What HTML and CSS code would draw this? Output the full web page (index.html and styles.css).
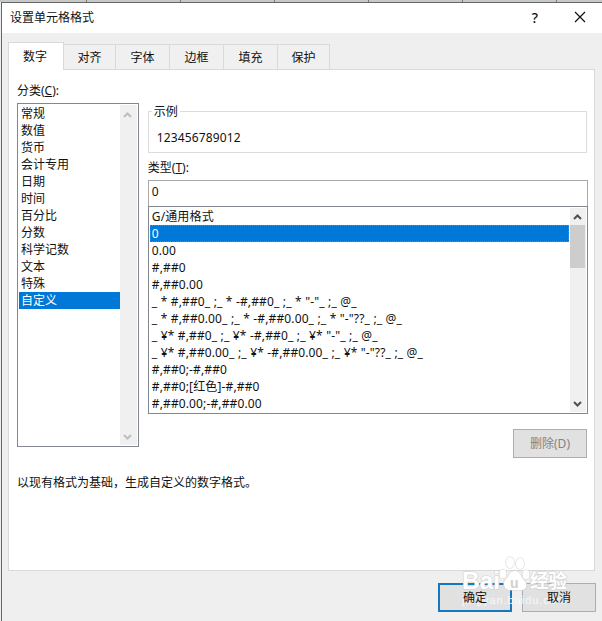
FILE: index.html
```html
<!DOCTYPE html>
<html lang="zh-CN">
<head>
<meta charset="utf-8">
<title>设置单元格格式</title>
<link rel="stylesheet" href="styles.css">
</head>
<body>
<div class="sheet-edge"></div>
<main class="dialog">
  <header class="titlebar">
    <h1>设置单元格格式</h1>
    <span class="help">?</span>
    <svg class="close" width="12" height="12" viewBox="0 0 12 12"><path d="M1 1l10 10M11 1L1 11"/></svg>
  </header>
  <nav class="tabs">
    <span class="tab active">数字</span><span class="tab first">对齐</span><span class="tab">字体</span><span class="tab">边框</span><span class="tab">填充</span><span class="tab last">保护</span>
  </nav>
  <section class="panel">
    <div class="columns">
      <div class="left">
        <div class="label">分类(<u>C</u>):</div>
        <div class="listbox categories">
          <ul>
            <li>常规</li><li>数值</li><li>货币</li><li>会计专用</li><li>日期</li><li>时间</li><li>百分比</li><li>分数</li><li>科学记数</li><li>文本</li><li>特殊</li><li class="selected">自定义</li>
          </ul>
          <div class="scroll disabled">
            <svg width="9" height="6" viewBox="0 0 9 6"><path d="M1 5l3.5-3.5L8 5"/></svg>
            <svg width="9" height="6" viewBox="0 0 9 6"><path d="M1 1l3.500 3.500L8 1"/></svg>
          </div>
        </div>
      </div>
      <div class="right">
        <fieldset><legend>示例</legend><div>123456789012</div></fieldset>
        <div class="label type-label">类型(<u>T</u>):</div>
        <div class="input">0</div>
        <div class="listbox formats">
          <ul>
            <li>G/通用格式</li>
            <li class="selected focus">0</li>
            <li>0.00</li>
            <li>#,##0</li>
            <li>#,##0.00</li>
            <li>_ * #,##0_ ;_ * -#,##0_ ;_ * "-"_ ;_ @_ </li>
            <li>_ * #,##0.00_ ;_ * -#,##0.00_ ;_ * "-"??_ ;_ @_ </li>
            <li>_ ¥* #,##0_ ;_ ¥* -#,##0_ ;_ ¥* "-"_ ;_ @_ </li>
            <li>_ ¥* #,##0.00_ ;_ ¥* -#,##0.00_ ;_ ¥* "-"??_ ;_ @_ </li>
            <li>#,##0;-#,##0</li>
            <li>#,##0;[红色]-#,##0</li>
            <li>#,##0.00;-#,##0.00</li>
          </ul>
          <div class="scroll">
            <svg width="9" height="6" viewBox="0 0 9 6"><path d="M1 5l3.500-3.500L8 5"/></svg>
            <i class="thumb"></i>
            <svg width="9" height="6" viewBox="0 0 9 6"><path d="M1 1l3.500 3.500L8 1"/></svg>
          </div>
        </div>
        <div class="button delete">删除(D)</div>
      </div>
    </div>
    <p class="hint">以现有格式为基础，生成自定义的数字格式。</p>
  </section>
  <footer>
    <div class="button default"><span>确定</span></div>
    <div class="button"><span>取消</span></div>
  </footer>
  <svg class="watermark" width="112" height="54" viewBox="0 0 112 54">
    <g class="mark">
      <text class="brand" x="1" y="34" textLength="38" lengthAdjust="spacingAndGlyphs">Bai</text>
      <ellipse cx="42" cy="19" rx="3.500" ry="4.500"/><ellipse cx="49" cy="7.500" rx="4" ry="5.500"/><ellipse cx="59" cy="8.500" rx="4" ry="5.500"/><ellipse cx="65" cy="19.500" rx="3.500" ry="4.500"/>
      <path d="M54 16c-5 0-6 5-9 8-4 4-2 11 4 11h11c6 0 7-6 3-10-3-3-4-9-9-9z"/>
      <text class="du" x="49" y="33">u</text>
      <text class="cn" x="69" y="33" textLength="37" lengthAdjust="spacingAndGlyphs">经验</text>
      <text class="url" x="1" y="49" textLength="104">jingyan.baidu.com</text>
    </g>
  </svg>
</main>
</body>
</html>
```
FILE: styles.css
```css
* { box-sizing: border-box; }
body {
  margin: 0; width: 602px; height: 621px; overflow: hidden; background: #efefef; color: #111;
  font: 12px/17px "Noto Sans", "Noto Sans CJK SC", sans-serif;
}
.sheet-edge { height: 2px; background: repeating-linear-gradient(90deg, #777 0 1px, #c8c8c8 1px 94px) -8px 0 / 700px 2px; }
.dialog { position: relative; height: 619px; margin-left: 1px; border: solid #666; border-width: 1px 0 0 1px; background: #efefef; }
.titlebar { height: 30px; padding: 0 16px 2px 8px; display: flex; align-items: center; background: #fff; }
h1 { margin: 0; font-size: 12px; font-weight: 400; flex: 1; }
.help { font-size: 14px; font-weight: 500; margin-right: 36px; }
.close path { fill: none; stroke: #111; stroke-width: 1.2; }
.tabs { display: flex; align-items: flex-end; height: 37px; padding-left: 6px; position: relative; z-index: 1; }
.tab { width: 54px; height: 26px; border: 1px solid #d9d9d9; border-left: 0; background: #f0f0f0; text-align: center; line-height: 25px; }
.tab.active { width: 56px; height: 28px; border: 1px solid #d9d9d9; border-bottom: 0; background: #fff; line-height: 27px; padding-right: 2px; }
.tab.first, .tab.last { width: 52px; }
.panel { margin: -1px 7px 0 6px; height: 502px; border: 1px solid #d9d9d9; background: #fff; padding: 12px 6px 0 8px; }
.columns { display: flex; gap: 9px; }
.left { width: 122px; }
.label { height: 21px; line-height: 17px; }
.listbox { border: 1px solid #828790; background: #fff; display: flex; padding: 1px; }
.categories { height: 344px; }
ul { list-style: none; margin: 0; padding: 0; flex: 1; }
li { height: 17px; padding-left: 2px; white-space: pre; }
.selected { background: #0078d7; color: #fff; }
.focus { outline: 1px dotted #b87333; outline-offset: -1px; }
.scroll { width: 17px; background: #f0f0f0; display: flex; flex-direction: column; align-items: center; padding: 7px 1px 5px 0; }
.scroll path { fill: none; stroke: #505050; stroke-width: 2; }
.disabled path { stroke: #bfbfbf; }
.scroll svg:last-child { margin-top: auto; }
.right { width: 441px; display: flex; flex-direction: column; }
fieldset { margin: 21px 1px 0 0; height: 50px; border: 1px solid #dcdcdc; padding: 9px 8px 0; min-width: 0; letter-spacing: .13px; }
legend { margin-left: -5px; padding: 0 2px; line-height: 17px; height: 17px; letter-spacing: 0; }
.type-label { margin-top: 6px; }
.input { height: 26px; border: 1px solid #aaa; border-bottom: 0; padding: 2px 3px; }
.formats { height: 208px; }
.formats li { letter-spacing: .13px; word-spacing: .15px; margin-right: 1px; }
.formats .scroll { width: 16px; padding-top: 6px; }
.thumb { width: 15px; height: 43px; background: #cdcdcd; margin-top: 5px; }
.button { width: 74px; height: 29px; border: 1px solid #adadad; background: #e1e1e1; text-align: center; line-height: 28px; }
.delete { align-self: flex-end; margin: 15px 1px 0 0; color: #838383; }
.hint { margin: 16px 0 0; }
footer { display: flex; justify-content: flex-end; gap: 10px; padding: 12px 6px 0 0; }
.default { border: 2px solid #1677bd; line-height: 26px; }
footer span { position: relative; z-index: 2; }
.watermark { position: absolute; left: 459px; top: 552px; }
.mark { fill: #fff; stroke: #d2d2d2; stroke-width: 1.2; paint-order: stroke; }
.brand { font: bold 24px "Liberation Sans", sans-serif; }
.du { font: bold 14px "Liberation Sans", sans-serif; fill: #d0d0d0; stroke: none; }
.cn { font: bold 19px "Noto Sans CJK SC", sans-serif; }
.url { font: 11px "Liberation Sans", sans-serif; stroke: none; fill: #f8f8f8; }
```
